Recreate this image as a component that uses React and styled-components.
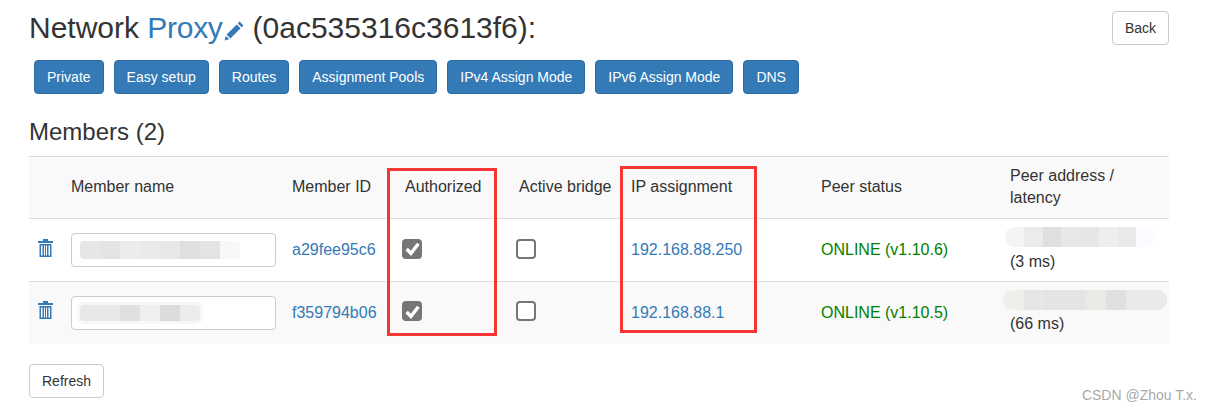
import React from "react";
import styled, { createGlobalStyle } from "styled-components";

const GlobalStyle = createGlobalStyle`
  html, body {
    margin: 0;
    padding: 0;
    background: #fff;
  }
  body {
    font-family: "Liberation Sans", Arial, sans-serif;
    font-size: 14px;
    line-height: 20px;
    color: #333;
  }
`;

const Page = styled.div`
  position: relative;
  width: 1212px;
  height: 411px;
  box-sizing: border-box;
  padding: 11px 43px 0 29px;
  overflow: hidden;
`;

const TitleRow = styled.div`
  display: flex;
  justify-content: space-between;
  align-items: flex-start;
`;

const Title = styled.h2`
  margin: 0;
  font-size: 30px;
  font-weight: 400;
  line-height: 33px;
`;

const ProxyLink = styled.a`
  color: #337ab7;
  letter-spacing: -0.3px;
  text-decoration: none;
`;

const PencilIcon = styled.svg`
  width: 21px;
  height: 21px;
  margin: 0 8px 0 1px;
  vertical-align: -3px;
  fill: #337ab7;
`;

const Button = styled.button`
  box-sizing: border-box;
  height: 34px;
  padding: 6px 12px;
  font-family: inherit;
  font-size: 14px;
  line-height: 20px;
  border-radius: 4px;
  border: 1px solid ${(p) => (p.$primary ? "#2e6da4" : "#ccc")};
  background: ${(p) => (p.$primary ? "#337ab7" : "#fff")};
  color: ${(p) => (p.$primary ? "#fff" : "#333")};
`;

const Toolbar = styled.div`
  display: flex;
  gap: 10px;
  margin: 15px 0 0 5px;
`;

const SectionTitle = styled.h3`
  margin: 25px 0 11px;
  font-size: 24px;
  font-weight: 400;
  line-height: 26px;
`;

const TableWrap = styled.div`
  position: relative;
`;

const Table = styled.table`
  width: 1140px;
  table-layout: fixed;
  border-collapse: collapse;
  border-spacing: 0;
  font-size: 16px;
  line-height: 22px;
`;

const HeadCell = styled.th`
  box-sizing: border-box;
  width: ${(p) => p.$width}px;
  height: 62px;
  padding: 7px 8px 9px;
  text-align: left;
  font-weight: 400;
  vertical-align: middle;
  background: #f9f9f9;
  border-top: 1px solid #ddd;
  border-bottom: 1px solid #ddd;
`;

const Row = styled.tr`
  height: ${(p) => p.$height}px;
  background: ${(p) => (p.$striped ? "#f9f9f9" : "#fff")};
`;

const Cell = styled.td`
  box-sizing: border-box;
  padding: 0 8px;
  vertical-align: middle;
  border-top: 1px solid #ddd;
`;

const TrashIcon = styled.svg`
  display: block;
  width: 15px;
  height: 18px;
  margin: -5px 0 0 1px;
  fill: #337ab7;
`;

const NameField = styled.div`
  box-sizing: border-box;
  display: flex;
  align-items: center;
  width: 205px;
  height: 34px;
  padding-left: 8px;
  background: #fff;
  border: 1px solid #ccc;
  border-radius: 4px;
`;

const Smudge = styled.div`
  display: flex;
  flex: none;
  width: fit-content;
  height: ${(p) => p.$height}px;
  border-radius: ${(p) => p.$radius}px;
  overflow: hidden;
  box-shadow: 0 0 0 ${(p) => p.$halo}px #f7f7f7;
`;

const SmudgeBit = styled.span`
  display: block;
  width: ${(p) => p.$size}px;
  background: ${(p) => p.$color};
`;

const MemberLink = styled.a`
  color: #337ab7;
  text-decoration: none;
`;

const CheckBox = styled.span`
  box-sizing: border-box;
  display: flex;
  align-items: center;
  justify-content: center;
  width: 20px;
  height: 20px;
  margin: -3px 0 0 -3px;
  border-radius: 4px;
  border: 2px solid #767676;
  background: ${(p) => (p.$checked ? "#767676" : "#fff")};
`;

const CheckMark = styled.svg`
  width: 15px;
  height: 15px;
  fill: none;
  stroke: #fff;
  stroke-width: 3.2;
`;

const Online = styled.span`
  color: green;
`;

const Latency = styled.div`
  margin-top: ${(p) => p.$gap}px;
`;

const PeerSmudge = styled.div`
  margin-left: ${(p) => p.$shift}px;
`;

const RefreshRow = styled.div`
  margin-top: 20px;
`;

const Highlight = styled.div`
  position: absolute;
  box-sizing: border-box;
  left: ${(p) => p.$left}px;
  top: ${(p) => p.$top}px;
  width: ${(p) => p.$width}px;
  height: ${(p) => p.$height}px;
  border: 3px solid #f73535;
`;

const Watermark = styled.div`
  position: absolute;
  right: 15px;
  bottom: 8px;
  font-size: 14px;
  line-height: 16px;
  color: #a9a9a9;
`;

const columns = [
  { label: "", width: 34 },
  { label: "Member name", width: 221 },
  { label: "Member ID", width: 113 },
  { label: "Authorized", width: 114 },
  { label: "Active bridge", width: 112 },
  { label: "IP assignment", width: 190 },
  { label: "Peer status", width: 189 },
  { label: "Peer address / latency", width: 167 },
];

const members = [
  {
    id: "a29fee95c6",
    ip: "192.168.88.250",
    status: "ONLINE (v1.10.6)",
    latency: "(3 ms)",
    rowHeight: 63,
    shift: -5,
    latencyGap: 4,
    nameBit: { height: 18, halo: 0 },
    peerBit: 18.75,
    nameSmudge: ["#e6e6e6", "#e4e4e2", "#ececec", "#e9eaec", "#e8e8e8", "#dfdfdd", "#e4e4e4", "#f8f8f8"],
    peerSmudge: ["#f4f4f2", "#ebebeb", "#dfdfdf", "#e8e8e8", "#e6e6e6", "#eceef0", "#e9e9e7", "#fbfcff"],
  },
  {
    id: "f359794b06",
    ip: "192.168.88.1",
    status: "ONLINE (v1.10.5)",
    latency: "(66 ms)",
    rowHeight: 62,
    shift: -7,
    latencyGap: 3,
    nameBit: { height: 16, halo: 3 },
    peerBit: 20.5,
    nameSmudge: ["#e8e8e8", "#e8e8e8", "#e0e0de", "#eef0f0", "#dcdcdc", "#ececec"],
    peerSmudge: ["#eeeeea", "#e6e6e6", "#e4e4e4", "#e4e4e4", "#e9e9e5", "#e0e0e0", "#e9e9e9", "#e9e9e9"],
  },
];

const Pencil = () => (
  <PencilIcon viewBox="0 0 21 21">
    <path d="M15.6 1.6 19.4 5.4 17.6 7.2 13.8 3.4Z" />
    <path d="M12.8 4.4 16.6 8.2 6.4 18.4 2.6 14.6Z" />
    <path d="M1.8 15.8 5.2 19.2 0.6 20.4Z" />
  </PencilIcon>
);

const Trash = () => (
  <TrashIcon viewBox="0 0 15 18">
    <path d="M5 0H10V2H15V4H0V2H5Z" />
    <path d="M1.5 5H13.5V18H1.5ZM3 6.5V16.5H4.5V6.5ZM6 6.5V16.5H7V6.5ZM8 6.5V16.5H9V6.5ZM10.5 6.5V16.5H12V6.5Z" fillRule="evenodd" />
  </TrashIcon>
);

const Check = () => (
  <CheckMark viewBox="0 0 14 14">
    <path d="M1.5 7.5 5.5 11.5 12.5 2.5" />
  </CheckMark>
);

const SmudgeBar = ({ colors, size, height, radius, halo = 0 }) => (
  <Smudge $height={height} $radius={radius} $halo={halo}>
    {colors.map((color, i) => (
      <SmudgeBit key={i} $size={size} $color={color} />
    ))}
  </Smudge>
);

const App = () => (
  <Page>
    <GlobalStyle />
    <TitleRow>
      <Title>
        Network <ProxyLink href="#">Proxy</ProxyLink>
        <Pencil />
        (0ac535316c3613f6):
      </Title>
      <Button>Back</Button>
    </TitleRow>
    <Toolbar>
      <Button $primary>Private</Button>
      <Button $primary>Easy setup</Button>
      <Button $primary>Routes</Button>
      <Button $primary>Assignment Pools</Button>
      <Button $primary>IPv4 Assign Mode</Button>
      <Button $primary>IPv6 Assign Mode</Button>
      <Button $primary>DNS</Button>
    </Toolbar>
    <SectionTitle>Members (2)</SectionTitle>
    <TableWrap>
      <Table>
        <thead>
          <tr>
            {columns.map((col) => (
              <HeadCell key={col.width + col.label} $width={col.width}>
                {col.label}
              </HeadCell>
            ))}
          </tr>
        </thead>
        <tbody>
          {members.map((m, i) => (
            <Row key={m.id} $striped={i === 1} $height={m.rowHeight}>
              <Cell>
                <Trash />
              </Cell>
              <Cell>
                <NameField>
                  <SmudgeBar colors={m.nameSmudge} size={20} height={m.nameBit.height} radius={4} halo={m.nameBit.halo} />
                </NameField>
              </Cell>
              <Cell>
                <MemberLink href="#">{m.id}</MemberLink>
              </Cell>
              <Cell>
                <CheckBox $checked>
                  <Check />
                </CheckBox>
              </Cell>
              <Cell>
                <CheckBox />
              </Cell>
              <Cell>
                <MemberLink href="#">{m.ip}</MemberLink>
              </Cell>
              <Cell>
                <Online>{m.status}</Online>
              </Cell>
              <Cell>
                <PeerSmudge $shift={m.shift}>
                  <SmudgeBar colors={m.peerSmudge} size={m.peerBit} height={20} radius={9} />
                </PeerSmudge>
                <Latency $gap={m.latencyGap}>{m.latency}</Latency>
              </Cell>
            </Row>
          ))}
        </tbody>
      </Table>
      <Highlight $left={358} $top={12} $width={110} $height={168} />
      <Highlight $left={591} $top={10} $width={137} $height={167} />
    </TableWrap>
    <RefreshRow>
      <Button>Refresh</Button>
    </RefreshRow>
    <Watermark>CSDN @Zhou T.x.</Watermark>
  </Page>
);

export default App;
